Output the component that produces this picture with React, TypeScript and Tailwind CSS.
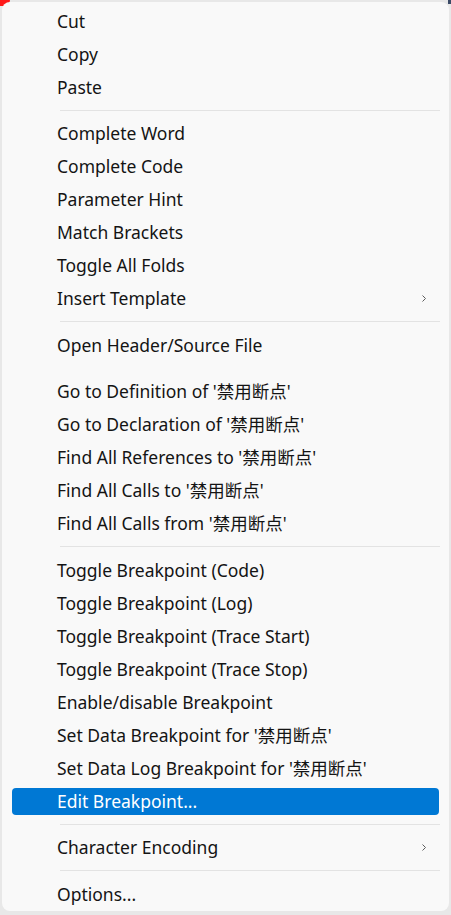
import React from 'react';

// ─── Types ────────────────────────────────────────────────────────────────────

type Entry =
  | { kind: 'item'; label: string; submenu?: boolean; active?: boolean }
  | { kind: 'sep'; line?: boolean };

const Q = "'禁用断点'";

const entries: Entry[] = [
  { kind: 'item', label: 'Cut' },
  { kind: 'item', label: 'Copy' },
  { kind: 'item', label: 'Paste' },
  { kind: 'sep', line: true },
  { kind: 'item', label: 'Complete Word' },
  { kind: 'item', label: 'Complete Code' },
  { kind: 'item', label: 'Parameter Hint' },
  { kind: 'item', label: 'Match Brackets' },
  { kind: 'item', label: 'Toggle All Folds' },
  { kind: 'item', label: 'Insert Template', submenu: true },
  { kind: 'sep', line: true },
  { kind: 'item', label: 'Open Header/Source File' },
  { kind: 'sep' },
  { kind: 'item', label: `Go to Definition of ${Q}` },
  { kind: 'item', label: `Go to Declaration of ${Q}` },
  { kind: 'item', label: `Find All References to ${Q}` },
  { kind: 'item', label: `Find All Calls to ${Q}` },
  { kind: 'item', label: `Find All Calls from ${Q}` },
  { kind: 'sep', line: true },
  { kind: 'item', label: 'Toggle Breakpoint (Code)' },
  { kind: 'item', label: 'Toggle Breakpoint (Log)' },
  { kind: 'item', label: 'Toggle Breakpoint (Trace Start)' },
  { kind: 'item', label: 'Toggle Breakpoint (Trace Stop)' },
  { kind: 'item', label: 'Enable/disable Breakpoint' },
  { kind: 'item', label: `Set Data Breakpoint for ${Q}` },
  { kind: 'item', label: `Set Data Log Breakpoint for ${Q}` },
  { kind: 'item', label: 'Edit Breakpoint...', active: true },
  { kind: 'sep', line: true },
  { kind: 'item', label: 'Character Encoding', submenu: true },
  { kind: 'sep', line: true },
  { kind: 'item', label: 'Options...' },
];

// ─── Pieces ───────────────────────────────────────────────────────────────────

function Chevron() {
  return (
    <svg width="6" height="9" viewBox="0 0 6 9" fill="none" className="text-[#5c5c5c]">
      <path d="M1.5 1.5 L4.5 4.5 L1.5 7.5" stroke="currentColor" strokeWidth="1" />
    </svg>
  );
}

function MenuItem({ label, submenu, active }: { label: string; submenu?: boolean; active?: boolean }) {
  return (
    <div className="h-[33px] py-[3px] px-[10px]">
      <div
        className={
          active
            ? 'h-full flex items-center rounded-[4px] bg-[#0078d4] text-white pl-[45px] pr-[12px]'
            : 'h-full flex items-center rounded-[4px] text-[#141414] pl-[45px] pr-[12px]'
        }
      >
        <span className="flex-1 whitespace-nowrap">{label}</span>
        {submenu && <Chevron />}
      </div>
    </div>
  );
}

function Separator({ line }: { line?: boolean }) {
  return (
    <div className="h-[13.5px] flex items-center pl-[58px] pr-[9px]">
      {line && <div className="h-px w-full bg-[#e3e3e3]" />}
    </div>
  );
}

// ─── App ──────────────────────────────────────────────────────────────────────

export default function App() {
  return (
    <div
      className="relative w-[451px] h-[915px] bg-[#e8e8e8] pt-[2px] px-[2px] overflow-hidden"
      style={{ fontFamily: '"Noto Sans", "Noto Sans CJK SC", sans-serif' }}
    >
      <div className="absolute -left-[6px] -top-[6px] w-[16px] h-[12px] rounded-full bg-[#ff1a1a]" />
      <div className="absolute right-0 top-0 w-[3px] h-[4px] bg-[#3a4a66]" />
      <div className="relative h-[909px] bg-[#f9f9f9] rounded-[8px] pt-[2.5px] text-[17.5px]">
        {entries.map((e, i) =>
          e.kind === 'item' ? (
            <MenuItem key={i} label={e.label} submenu={e.submenu} active={e.active} />
          ) : (
            <Separator key={i} line={e.line} />
          ),
        )}
      </div>
    </div>
  );
}
